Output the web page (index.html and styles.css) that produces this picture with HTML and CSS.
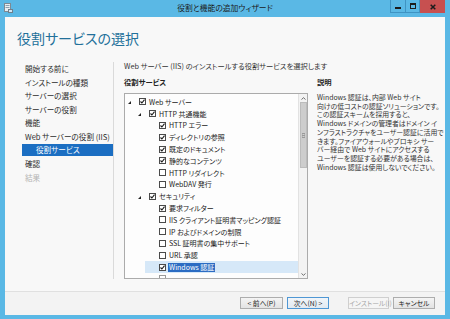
FILE: index.html
```html
<!DOCTYPE html>
<html lang="ja">
<head>
<meta charset="utf-8">
<title>役割と機能の追加ウィザード</title>
<link rel="stylesheet" href="styles.css">
</head>
<body>
<div class="window">
  <div class="titlebar">
    <div class="tb-left">
      <svg class="tb-icon" viewBox="0 0 9 10" width="9" height="10">
        <rect x="0.5" y="0.5" width="6" height="8" fill="#e8eef2" stroke="#7d8a94"/>
        <rect x="1.5" y="2" width="4" height="1" fill="#8aa0b0"/>
        <rect x="1.5" y="4" width="4" height="1" fill="#8aa0b0"/>
        <rect x="4" y="6" width="5" height="4" fill="#6f7f8c"/>
        <rect x="5" y="7" width="3" height="2" fill="#cfe6f5"/>
      </svg>
    </div>
    <div class="tb-title">役割と機能の追加ウィザード</div>
    <div class="tb-controls">
      <span class="ctl ctl-min"><svg viewBox="0 0 6 6" width="6" height="6"><rect x="0" y="4" width="6" height="2" fill="#1c1c1c"/></svg></span>
      <span class="ctl ctl-max"><svg viewBox="0 0 6 6" width="6" height="6"><rect x="0.5" y="0.5" width="5" height="5" fill="none" stroke="#1c1c1c"/><rect x="0" y="0" width="6" height="2" fill="#1c1c1c"/></svg></span>
      <span class="ctl ctl-close"><svg viewBox="0 0 6 6" width="6" height="6"><path d="M0.7 0.7 L5.3 5.3 M5.3 0.7 L0.7 5.3" stroke="#1c1c1c" stroke-width="1.5"/></svg></span>
    </div>
  </div>

  <div class="client">
    <header class="header">
      <h1>役割サービスの選択</h1>
    </header>

    <div class="main">
      <nav class="nav">
        <div class="nav-item">開始する前に</div>
        <div class="nav-item">インストールの種類</div>
        <div class="nav-item">サーバーの選択</div>
        <div class="nav-item">サーバーの役割</div>
        <div class="nav-item">機能</div>
        <div class="nav-item">Web サーバーの役割 (IIS)</div>
        <div class="nav-item active">役割サービス</div>
        <div class="nav-item">確認</div>
        <div class="nav-item disabled">結果</div>
      </nav>

      <section class="content">
        <p class="intro">Web サーバー (IIS) のインストールする役割サービスを選択します</p>
        <div class="cols">
          <div class="svc">
            <h2 class="label">役割サービス</h2>
            <div class="tree-box">
              <ul class="tree">
                <li class="row l0"><span class="exp open"></span><svg class="cb" viewBox="0 0 7 7"><rect x=".5" y=".5" width="6" height="6" fill="#fff" stroke="#4a4a4a"/><path d="M1.5 3.5 L2.9 5 L5.5 1.7" fill="none" stroke="#1a1a1a" stroke-width="1.1"/></svg><span class="txt">Web サーバー</span></li>
                <li class="row l1"><span class="exp open"></span><svg class="cb" viewBox="0 0 7 7"><rect x=".5" y=".5" width="6" height="6" fill="#fff" stroke="#4a4a4a"/><path d="M1.5 3.5 L2.9 5 L5.5 1.7" fill="none" stroke="#1a1a1a" stroke-width="1.1"/></svg><span class="txt">HTTP 共通機能</span></li>
                <li class="row l2"><span class="exp"></span><svg class="cb" viewBox="0 0 7 7"><rect x=".5" y=".5" width="6" height="6" fill="#fff" stroke="#4a4a4a"/><path d="M1.5 3.5 L2.9 5 L5.5 1.7" fill="none" stroke="#1a1a1a" stroke-width="1.1"/></svg><span class="txt">HTTP エラー</span></li>
                <li class="row l2"><span class="exp"></span><svg class="cb" viewBox="0 0 7 7"><rect x=".5" y=".5" width="6" height="6" fill="#fff" stroke="#4a4a4a"/><path d="M1.5 3.5 L2.9 5 L5.5 1.7" fill="none" stroke="#1a1a1a" stroke-width="1.1"/></svg><span class="txt">ディレクトリの参照</span></li>
                <li class="row l2"><span class="exp"></span><svg class="cb" viewBox="0 0 7 7"><rect x=".5" y=".5" width="6" height="6" fill="#fff" stroke="#4a4a4a"/><path d="M1.5 3.5 L2.9 5 L5.5 1.7" fill="none" stroke="#1a1a1a" stroke-width="1.1"/></svg><span class="txt">既定のドキュメント</span></li>
                <li class="row l2"><span class="exp"></span><svg class="cb" viewBox="0 0 7 7"><rect x=".5" y=".5" width="6" height="6" fill="#fff" stroke="#4a4a4a"/><path d="M1.5 3.5 L2.9 5 L5.5 1.7" fill="none" stroke="#1a1a1a" stroke-width="1.1"/></svg><span class="txt">静的なコンテンツ</span></li>
                <li class="row l2"><span class="exp"></span><svg class="cb" viewBox="0 0 7 7"><rect x=".5" y=".5" width="6" height="6" fill="#fff" stroke="#4a4a4a"/></svg><span class="txt">HTTP リダイレクト</span></li>
                <li class="row l2"><span class="exp"></span><svg class="cb" viewBox="0 0 7 7"><rect x=".5" y=".5" width="6" height="6" fill="#fff" stroke="#4a4a4a"/></svg><span class="txt">WebDAV 発行</span></li>
                <li class="row l1"><span class="exp open"></span><svg class="cb" viewBox="0 0 7 7"><rect x=".5" y=".5" width="6" height="6" fill="#fff" stroke="#4a4a4a"/><path d="M1.5 3.5 L2.9 5 L5.5 1.7" fill="none" stroke="#1a1a1a" stroke-width="1.1"/></svg><span class="txt">セキュリティ</span></li>
                <li class="row l2"><span class="exp"></span><svg class="cb" viewBox="0 0 7 7"><rect x=".5" y=".5" width="6" height="6" fill="#fff" stroke="#4a4a4a"/><path d="M1.5 3.5 L2.9 5 L5.5 1.7" fill="none" stroke="#1a1a1a" stroke-width="1.1"/></svg><span class="txt">要求フィルター</span></li>
                <li class="row l2"><span class="exp"></span><svg class="cb" viewBox="0 0 7 7"><rect x=".5" y=".5" width="6" height="6" fill="#fff" stroke="#4a4a4a"/></svg><span class="txt">IIS クライアント証明書マッピング認証</span></li>
                <li class="row l2"><span class="exp"></span><svg class="cb" viewBox="0 0 7 7"><rect x=".5" y=".5" width="6" height="6" fill="#fff" stroke="#4a4a4a"/></svg><span class="txt">IP およびドメインの制限</span></li>
                <li class="row l2"><span class="exp"></span><svg class="cb" viewBox="0 0 7 7"><rect x=".5" y=".5" width="6" height="6" fill="#fff" stroke="#4a4a4a"/></svg><span class="txt">SSL 証明書の集中サポート</span></li>
                <li class="row l2"><span class="exp"></span><svg class="cb" viewBox="0 0 7 7"><rect x=".5" y=".5" width="6" height="6" fill="#fff" stroke="#4a4a4a"/></svg><span class="txt">URL 承認</span></li>
                <li class="row l2 sel"><span class="exp"></span><svg class="cb" viewBox="0 0 7 7"><rect x=".5" y=".5" width="6" height="6" fill="#fff" stroke="#4a4a4a"/><path d="M1.5 3.5 L2.9 5 L5.5 1.7" fill="none" stroke="#1a1a1a" stroke-width="1.1"/></svg><span class="txt">Windows 認証</span></li>
                <li class="row l2"><span class="exp"></span><svg class="cb" viewBox="0 0 7 7"><rect x=".5" y=".5" width="6" height="6" fill="#fff" stroke="#9a9a9a"/></svg></li>
              </ul>
              <div class="sb">
                <div class="sb-btn"><svg viewBox="0 0 5 3" width="5" height="3"><path d="M0.5 2.5 L2.5 0.7 L4.5 2.5" fill="none" stroke="#606060" stroke-width="0.9"/></svg></div>
                <div class="sb-thumb"><svg viewBox="0 0 3 5" width="3" height="5"><rect x="0" y="0" width="3" height="5" fill="#9a9a9a"/><rect x="0.5" y="1" width="2" height="0.8" fill="#e0e0e0"/><rect x="0.5" y="3" width="2" height="0.8" fill="#e0e0e0"/></svg></div>
                <div class="sb-track"></div>
                <div class="sb-btn"><svg viewBox="0 0 5 3" width="5" height="3"><path d="M0.5 0.5 L2.5 2.3 L4.5 0.5" fill="none" stroke="#606060" stroke-width="0.9"/></svg></div>
              </div>
            </div>
          </div>
          <div class="desc">
            <h2 class="label">説明</h2>
            <p class="desc-text">Windows 認証は、内部 Web サイト<br>向けの低コストの認証ソリューションです。<br>この認証スキームを採用すると、<br>Windows ドメインの管理者はドメイン イ<br>ンフラストラクチャをユーザー認証に活用で<br>きます。ファイアウォールやプロキシ サー<br>バー経由で Web サイトにアクセスする<br>ユーザーを認証する必要がある場合は、<br>Windows 認証は使用しないでください。</p>
          </div>
        </div>
      </section>
    </div>

    <footer class="footer">
      <button class="btn">&lt; 前へ(P)</button>
      <button class="btn btn-default">次へ(N) &gt;</button>
      <button class="btn btn-disabled">インストール(I)</button>
      <button class="btn">キャンセル</button>
    </footer>
  </div>
</div>
</body>
</html>
```
FILE: styles.css
```css
* { box-sizing: border-box; }
html, body { margin: 0; padding: 0; }
body {
  width: 450px;
  height: 319px;
  overflow: hidden;
  font-family: "Noto Sans CJK JP", "Noto Sans", sans-serif;
  font-feature-settings: "palt";
  color: #222;
}

.window {
  width: 450px;
  height: 319px;
  background: #5ab8e5;
  display: flex;
  flex-direction: column;
}

/* title bar */
.titlebar {
  height: 17px;
  flex: none;
  display: grid;
  grid-template-columns: 1fr auto 1fr;
  align-items: start;
}
.tb-icon { display: block; margin: 3px 0 0 4px; }
.tb-title {
  font-size: 7.8px;
  line-height: 16px;
  color: #1a1a1a;
  white-space: nowrap;
}
.tb-controls {
  justify-self: end;
  display: flex;
  margin-right: 5px;
  height: 13px;
}
.ctl {
  height: 13px;
  display: flex;
  align-items: center;
  justify-content: center;
}
.ctl-min { width: 16px; border: 1px solid #3f93c2; border-top: 0; }
.ctl-max { width: 14px; border: 1px solid #3f93c2; border-top: 0; border-left: 0; }
.ctl-close { width: 25px; background: #c75050; }

/* client */
.client {
  flex: 1;
  margin: 0 5px 4px;
  background: #f8f8f8;
  display: flex;
  flex-direction: column;
  min-height: 0;
}
.header h1 {
  margin: 0;
  padding: 12px 0 15px 12px;
  font-size: 14px;
  line-height: 18px;
  font-weight: normal;
  color: #22709a;
  white-space: nowrap;
}

.main {
  flex: 1;
  display: flex;
  padding-bottom: 12px;
  min-height: 0;
}

.nav {
  width: 109px;
  flex: none;
  border-right: 1px solid #dadada;
}
.nav-item {
  font-size: 7.6px;
  line-height: 13.6px;
  padding-left: 20px;
  color: #2c2c2c;
  white-space: nowrap;
}
.nav-item.active {
  margin: 0.8px 0 0.8px 17px;
  line-height: 12px;
  padding-left: 14px;
  background: #1b6ec2;
  color: #fff;
}
.nav-item.disabled { color: #b4b4b4; }

.content {
  flex: 1;
  padding-left: 10px;
  display: flex;
  flex-direction: column;
  min-width: 0;
}
.intro {
  margin: 0;
  font-size: 7.3px;
  line-height: 9px;
  color: #333;
  white-space: nowrap;
}
.cols {
  flex: 1;
  display: flex;
  margin-top: 6.5px;
  min-height: 0;
}
.svc {
  width: 184px;
  flex: none;
  display: flex;
  flex-direction: column;
}
.label {
  margin: 0 0 6.5px;
  font-size: 7.3px;
  line-height: 9px;
  font-weight: bold;
  color: #222;
}

.tree-box {
  flex: 1;
  min-height: 0;
  border: 1px solid #ababab;
  background: #fdfdfd;
  display: flex;
  overflow: hidden;
}
.tree {
  flex: 1;
  min-width: 0;
  list-style: none;
  margin: 0;
  padding: 2px 0 0;
  overflow: hidden;
}
.row {
  height: 11.8px;
  display: flex;
  align-items: center;
  padding-left: 3px;
  font-size: 7px;
  white-space: nowrap;
  color: #222;
}
.l1 { margin-left: 10px; }
.l2 { margin-left: 20px; }
.exp {
  width: 11px;
  flex: none;
  display: flex;
  align-items: center;
}
.exp.open::before {
  content: "";
  width: 0;
  height: 0;
  margin-top: 1.5px;
  border-style: solid;
  border-width: 0 0 3px 3px;
  border-color: transparent transparent #222 transparent;
}
.cb { width: 7px; height: 7px; flex: none; display: block; }
.txt { margin-left: 3px; }
.row.sel { background: #d6e8f8; }
.row.sel .txt {
  background: #2b6cc3;
  color: #fff;
  line-height: 9px;
  padding: 0 1px;
  margin-left: 2px;
}

.sb {
  width: 9px;
  flex: none;
  background: #f3f3f3;
  border-left: 1px solid #e2e2e2;
  display: flex;
  flex-direction: column;
  align-items: center;
}
.sb-btn {
  height: 8px;
  width: 100%;
  display: flex;
  align-items: center;
  justify-content: center;
}
.sb-thumb {
  width: 7px;
  height: 66px;
  background: #cdcdcd;
  border: 1px solid #bcbcbc;
  display: flex;
  align-items: center;
  justify-content: center;
}
.sb-thumb svg { display: block; }
.sb-track { flex: 1; }

.desc { margin-left: 9px; min-width: 0; }
.desc-text {
  margin: 5px 0 0;
  font-size: 6.9px;
  line-height: 8.7px;
  color: #333;
  white-space: nowrap;
}

/* footer */
.footer {
  height: 24px;
  flex: none;
  border-top: 1px solid #e0e0e0;
  background: #f3f3f3;
  display: flex;
  justify-content: flex-end;
  align-items: flex-start;
  padding: 5px 10px 0 0;
  gap: 4px;
}
.btn {
  height: 12px;
  width: 42px;
  padding: 0;
  margin: 0;
  font-family: inherit;
  font-feature-settings: "palt";
  font-size: 6.8px;
  line-height: 10px;
  color: #222;
  border: 1px solid #adadad;
  background: linear-gradient(#f4f4f4, #e3e3e3);
  white-space: nowrap;
}
.btn:first-child { width: 43px; }
.btn-default {
  border-color: #4f97d4;
  background: linear-gradient(#f1f5f9, #e2eaf2);
}
.btn-disabled {
  width: 41px;
  margin-left: 15px;
  color: #a6a6a6;
  border-color: #cfcfcf;
  background: #f5f5f5;
}
```
